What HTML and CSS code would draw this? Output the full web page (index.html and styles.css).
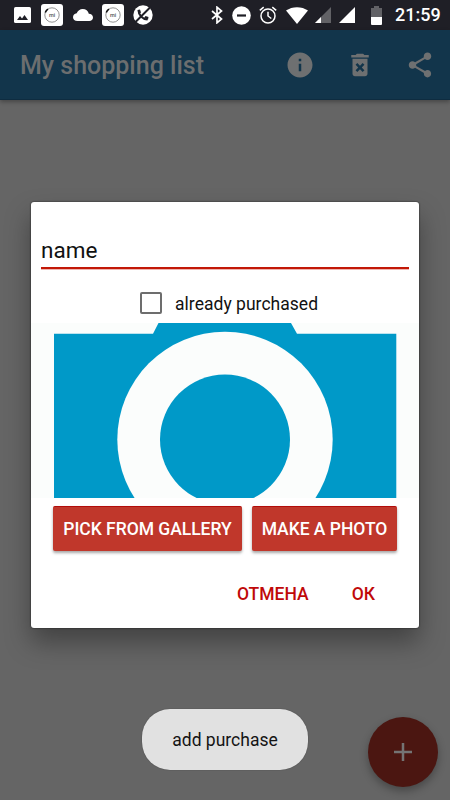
FILE: index.html
```html
<!DOCTYPE html>
<html lang="en">
<head>
<meta charset="utf-8">
<title>My shopping list</title>
<link rel="stylesheet" href="styles.css">
</head>
<body>
<div class="screen">
  <header class="status">
    <div class="notifications">
      <svg width="17" height="16" viewBox="0 0 17 16"><rect width="17" height="16" rx="1.600" fill="#fff"/><path d="M3 13l3-4 2 2.400L10.500 8l3.500 5z" fill="#1f1f26"/></svg>
      <svg class="mi" width="22" height="22" viewBox="0 0 22 22"><rect width="22" height="22" rx="3" fill="#fff"/><circle cx="11" cy="11" r="7.200" fill="none" stroke="#777" stroke-width=".8"/><path d="M4.300 8.500A7 7 0 0 1 7 5.200" fill="none" stroke="#111" stroke-width="1.600"/><text x="11" y="13.200" text-anchor="middle">mi</text></svg>
      <svg class="cloud" width="20" height="12" viewBox="0 0 20 12"><path d="M4.500 12C1.800 12 0 10.400 0 8.200c0-2 1.500-3.600 3.700-3.900C4.700 1.700 7 0 9.700 0c3.100 0 5.500 2 6.100 4.800 2.400.1 4.200 1.500 4.200 3.700 0 2-1.600 3.500-3.700 3.500z" fill="#fff"/></svg>
      <svg class="mi" width="22" height="22" viewBox="0 0 22 22"><rect width="22" height="22" rx="3" fill="#fff"/><circle cx="11" cy="11" r="7.200" fill="none" stroke="#777" stroke-width=".8"/><path d="M4.300 8.500A7 7 0 0 1 7 5.200" fill="none" stroke="#111" stroke-width="1.600"/><text x="11" y="13.200" text-anchor="middle">mi</text></svg>
      <svg class="call" width="20" height="20" viewBox="0 0 20 20"><circle cx="10" cy="10" r="9.700" fill="#fff"/><path d="M5.500 5.500c0 4.500 4.500 9 9 9" fill="none" stroke="#1f1f26" stroke-width="2"/><path d="M4.500 5l2.500-.5 1 3-2 1.500zM11 13l1.500-2 3 1-.5 2.800z" fill="#1f1f26"/><path d="M2 17.500L18 1.500" stroke="#1f1f26" stroke-width="2"/></svg>
    </div>
    <div class="system">
      <svg class="bt" width="12" height="18" viewBox="0 0 12 18"><path d="M1 5l9.500 8L6 16.800V1.200L10.500 5 1 13" fill="none" stroke="#fff" stroke-width="1.700"/></svg>
      <svg class="dnd" width="19" height="19" viewBox="0 0 19 19"><circle cx="9.500" cy="9.500" r="9.300" fill="#fff"/><path d="M5 9.500h9" stroke="#1f1f26" stroke-width="2.200"/></svg>
      <svg class="alarm" width="18" height="18" viewBox="0 0 18 18" fill="none" stroke="#fff" stroke-width="1.500"><circle cx="9" cy="10" r="7"/><path d="M9 5.800V10l3.300 2.500M.8 4.400L4.700 1.100M17.200 4.400L13.300 1.100"/></svg>
      <svg class="wifi" width="22" height="17" viewBox="0 0 22 17"><path d="M0 3.500C6.300-1 15.700-1 22 3.500L11 17z" fill="#fff"/></svg>
      <svg class="sig1" width="16" height="16" viewBox="0 0 16 16"><path d="M16 0v16H0z" fill="#626266"/><path d="M0 16l6-6v6z" fill="#fff"/></svg>
      <svg class="sig2" width="16" height="16" viewBox="0 0 16 16"><path d="M16 0v16H0z" fill="#fff"/></svg>
      <svg class="battery" width="11" height="19" viewBox="0 0 11 19"><path d="M3 0h5v2h3v9H0V2h3z" fill="#626266"/><path d="M0 11h11v7q0 1-1 1H1q-1 0-1-1z" fill="#fff"/></svg>
      <span class="clock">21:59</span>
    </div>
  </header>
  <nav class="appbar">
    <h1>My shopping list</h1>
    <div class="actions">
      <svg width="30" height="30" viewBox="0 0 24 24"><path d="M12 2C6.480 2 2 6.480 2 12s4.480 10 10 10 10-4.480 10-10S17.520 2 12 2zm1 15h-2v-6h2v6zm0-8h-2V7h2v2z"/></svg>
      <svg width="30" height="30" viewBox="0 0 24 24"><path fill-rule="evenodd" d="M6 19c0 1.100.9 2 2 2h8c1.100 0 2-.9 2-2V7H6v12zm2.460-7.120l1.410-1.410L12 12.590l2.120-2.120 1.410 1.410L13.410 14l2.120 2.120-1.410 1.410L12 15.410l-2.120 2.120-1.410-1.410L10.590 14zM15.500 4l-1-1h-5l-1 1H5v2h14V4z"/></svg>
      <svg width="30" height="30" viewBox="0 0 24 24"><path d="M18 16.080c-.76 0-1.440.3-1.960.77L8.910 12.700c.05-.23.09-.46.09-.7s-.04-.47-.09-.7l7.050-4.110c.54.5 1.250.81 2.040.81 1.660 0 3-1.340 3-3s-1.340-3-3-3-3 1.340-3 3c0 .24.04.47.09.7L8.040 9.810C7.500 9.310 6.790 9 6 9c-1.660 0-3 1.340-3 3s1.340 3 3 3c.79 0 1.500-.31 2.040-.81l7.120 4.160c-.05.21-.08.43-.08.65 0 1.610 1.310 2.920 2.920 2.920s2.920-1.310 2.920-2.920-1.310-2.920-2.920-2.920z"/></svg>
    </div>
  </nav>
  <button class="fab" aria-label="Add"><svg width="18" height="18" viewBox="0 0 18 18"><path d="M9 0v18M0 9h18" stroke="#747474" stroke-width="2.500"/></svg></button>
  <section class="dialog">
    <div class="field">name</div>
    <label class="check"><span class="box"></span><span class="check-text">already purchased</span></label>
    <svg class="photo" width="388" height="175" viewBox="0 0 388 175"><rect width="388" height="175" fill="#fbfdfc"/><path d="M23 175V10.700h99L127.500 0H260l6 10.700h99.300V175z" fill="#0099c8"/><circle cx="194" cy="116.500" r="107.700" fill="#fbfdfc"/><circle cx="194" cy="116.500" r="65" fill="#0099c8"/></svg>
    <div class="buttons">
      <button class="pick"><span>PICK FROM GALLERY</span></button>
      <button class="make"><span>MAKE A PHOTO</span></button>
    </div>
    <div class="answers"><span class="cancel">ОТМЕНА</span><span class="ok">ОК</span></div>
  </section>
  <div class="toast"><span>add purchase</span></div>
</div>
</body>
</html>
```
FILE: styles.css
```css
* { box-sizing: border-box; }
body { margin: 0; font-family: Roboto, sans-serif; }
svg { display: block; flex: none; }
button { border: 0; padding: 0; font-family: inherit; }
.screen { position: relative; width: 450px; height: 800px; overflow: hidden; background: #656565; }

.status { display: flex; justify-content: space-between; height: 30px; background: #1f1f26; }
.notifications, .system { display: flex; align-items: center; }
.notifications { padding-left: 14px; }
.notifications .mi { margin-left: 10px; }
.mi text { font: 500 5.500px Roboto, sans-serif; fill: #555; }
.notifications .cloud { margin-left: 10px; }
.notifications .cloud + .mi { margin-left: 9px; }
.notifications .call { margin-left: 9px; }
.system { padding-right: 10px; }
.dnd { margin-left: 9px; }
.alarm { margin-left: 8px; }
.wifi { margin-left: 9px; }
.sig1 { margin-left: 7px; }
.sig2 { margin-left: 8px; }
.battery { margin-left: 16px; margin-top: 1px; }
.clock { width: 45px; margin-left: 13px; color: #fff; font-size: 18px; font-weight: 500; line-height: 32px; white-space: nowrap; }

.appbar { display: flex; align-items: center; justify-content: space-between; height: 70px; padding: 1px 15px 0 20px; background: #12354b; border-bottom: 1px solid #0e2c40; box-shadow: 0 2px 4px rgba(0, 0, 0, .3); }
.appbar h1 { margin: 0; padding-top: 1px; color: #6c6e6f; font-size: 25px; font-weight: 500; white-space: nowrap; }
.actions { display: flex; gap: 30px; fill: #6e7071; }

.dialog { position: absolute; left: 31px; top: 202px; width: 388px; height: 426px; border-radius: 3px; background: #fff; color: #111; box-shadow: 0 0 2px rgba(0, 0, 0, .75), 0 14px 26px rgba(0, 0, 0, .35); }
.field { height: 67px; margin: 0 10px; padding-top: 33px; border-bottom: 2px solid #c21807; box-shadow: 0 1px 0 #f0b5b0; font-size: 22.500px; line-height: 30px; }
.check { display: flex; align-items: center; gap: 13px; height: 22px; margin: 23px 0 9px 109px; font-size: 17.500px; }
.box { width: 22px; height: 22px; border: 2px solid #6d6d6d; border-radius: 2px; }
.check-text { padding-top: 1px; letter-spacing: .03px; }
.buttons { display: flex; gap: 10px; margin: 8px 0 0 22px; }
.buttons button { height: 45px; border-radius: 2px; background: #c0372b; border-top: 1px solid #b20d0a; color: #fff; font-size: 17.500px; font-weight: 500; letter-spacing: -.03px; white-space: nowrap; box-shadow: 0 2px 3px rgba(0, 0, 0, .35); }
.buttons .pick { width: 189px; }
.buttons .make { width: 145px; }
.answers { display: flex; justify-content: flex-end; gap: 43px; margin: 31px 44px 0 0; color: #c00909; font-size: 17.500px; line-height: 24px; font-weight: 500; }

.toast { position: absolute; left: 142px; top: 709px; display: flex; align-items: center; justify-content: center; width: 166px; height: 61px; padding-top: 1px; border-radius: 28px; background: #e1e1e1; color: #141414; font-size: 17.500px; box-shadow: 0 0 1px rgba(0, 0, 0, .5); }
.fab { position: absolute; left: 367.500px; top: 717.400px; display: flex; align-items: center; justify-content: center; width: 70px; height: 70px; border-radius: 50%; background: #4b1611; box-shadow: 0 4px 8px rgba(0, 0, 0, .3); }
```
